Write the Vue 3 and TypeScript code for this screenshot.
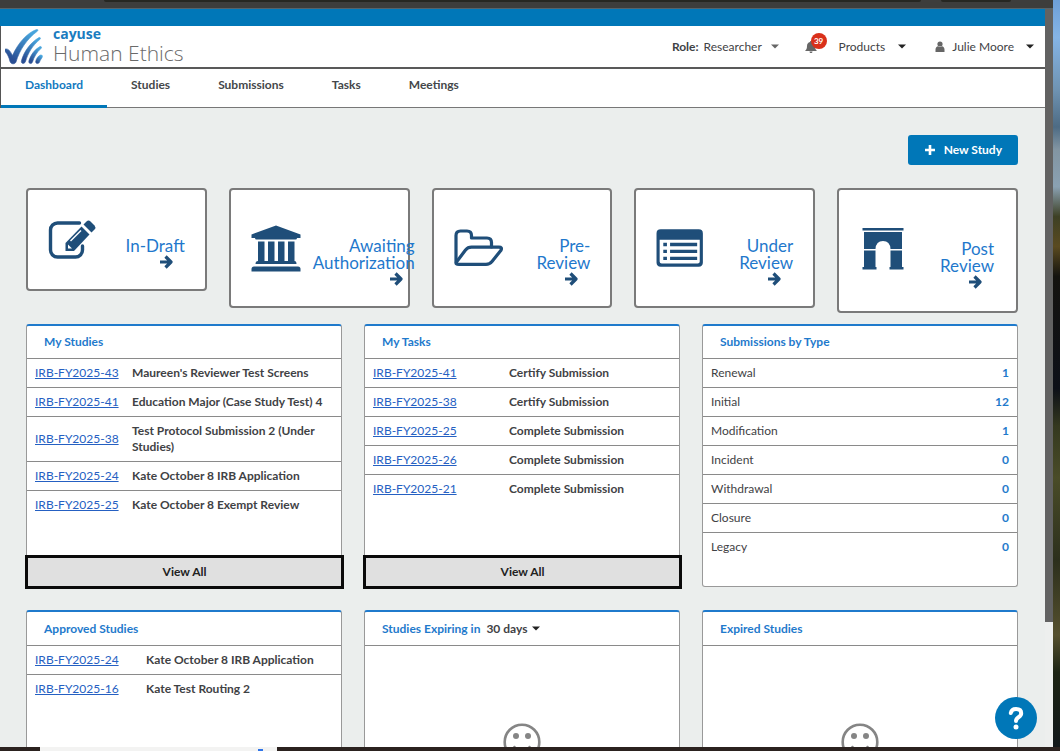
<script setup lang="ts">
import { ref } from 'vue'

interface StudyRow {
  id: string
  title: string
}

interface StatusCard {
  icon: string
  lines: string[]
  tall?: boolean
}

const tabs: string[] = ['Dashboard', 'Studies', 'Submissions', 'Tasks', 'Meetings']
const activeTab = ref('Dashboard')
const role = ref('Researcher')
const expiry = ref('30 days')

const cards: StatusCard[] = [
  { icon: 'draft', lines: ['In-Draft'] },
  { icon: 'bank', lines: ['Awaiting', 'Authorization'] },
  { icon: 'folder', lines: ['Pre-', 'Review'] },
  { icon: 'list', lines: ['Under', 'Review'] },
  { icon: 'arch', lines: ['Post', 'Review'], tall: true },
]

const myStudies: StudyRow[] = [
  { id: 'IRB-FY2025-43', title: "Maureen's Reviewer Test Screens" },
  { id: 'IRB-FY2025-41', title: 'Education Major (Case Study Test) 4' },
  { id: 'IRB-FY2025-38', title: 'Test Protocol Submission 2 (Under Studies)' },
  { id: 'IRB-FY2025-24', title: 'Kate October 8 IRB Application' },
  { id: 'IRB-FY2025-25', title: 'Kate October 8 Exempt Review' },
]

const myTasks: StudyRow[] = [
  { id: 'IRB-FY2025-41', title: 'Certify Submission' },
  { id: 'IRB-FY2025-38', title: 'Certify Submission' },
  { id: 'IRB-FY2025-25', title: 'Complete Submission' },
  { id: 'IRB-FY2025-26', title: 'Complete Submission' },
  { id: 'IRB-FY2025-21', title: 'Complete Submission' },
]

const approved: StudyRow[] = [
  { id: 'IRB-FY2025-24', title: 'Kate October 8 IRB Application' },
  { id: 'IRB-FY2025-16', title: 'Kate Test Routing 2' },
]

const types: { name: string; count: number }[] = [
  { name: 'Renewal', count: 1 },
  { name: 'Initial', count: 12 },
  { name: 'Modification', count: 1 },
  { name: 'Incident', count: 0 },
  { name: 'Withdrawal', count: 0 },
  { name: 'Closure', count: 0 },
  { name: 'Legacy', count: 0 },
]
</script>

<template>
  <div class="desktop">
    <div class="workspace">
      <div class="window">
        <div class="chrome"><span class="chrome-a"></span><span class="chrome-b"></span></div>
        <div class="viewport">
          <div class="page">
            <div class="brandbar"></div>
            <header class="header">
              <a class="logo" href="#">
                <svg class="logo-mark" viewBox="0 0 38 36" aria-hidden="true">
                  <defs>
                    <linearGradient id="mark" x1="0" y1="1" x2="0.6" y2="0">
                      <stop offset="0.2" stop-color="#2a4f94" />
                      <stop offset="1" stop-color="#47a4dc" />
                    </linearGradient>
                  </defs>
                  <g fill="url(#mark)" stroke="url(#mark)" stroke-width="0.600">
                    <path d="M0.5 20C3 19.500 5 21.500 7.500 26.500C13 14 22 4 31.500 0.500C33 0 33.500 1.500 32 2.500C22 10 14.500 21 11 33C10 35.500 6 35.500 5 32.500C4 28.500 2.500 25 0.500 23C-0.500 21.500 -0.500 20.500 0.500 20Z" />
                    <path d="M34 8.500C35.500 8 36 9.500 34.800 10.500C27.500 16.500 23 24 20.500 32.500C19.500 35.500 15.500 35 16.500 31.500C19 22.500 25.500 13.500 34 8.500Z" />
                    <path d="M35 17.500C36.500 17 37 18.500 36 19.500C31.500 23.500 29 28 27.500 33C26.500 35.500 23 35 24 31.500C26 25.500 29.500 20.500 35 17.500Z" />
                    <path d="M35.500 26C37.500 25.500 38 27.500 36.800 29C35.500 30.500 35 32 34.300 33.500C33 35.500 30 34.500 30.800 32C31.500 29.500 33 27 35.500 26Z" />
                  </g>
                </svg>
                <span class="wordmark">
                  <span class="brand">cayuse</span>
                  <span class="product">Human Ethics</span>
                </span>
              </a>
              <div class="tools">
                <label class="role" for="role">Role:</label>
                <select id="role" v-model="role" class="plain-select role-select">
                  <option>Researcher</option>
                </select>
                <svg class="caret soft" viewBox="0 0 8 5" aria-hidden="true"><path d="M0 0.500h8L4 4.500z" /></svg>
                <button class="bell" type="button" aria-label="Notifications">
                  <svg viewBox="0 0 14 14" aria-hidden="true">
                    <path d="M7 1c.7 0 1 .4 1 1 2 .5 3 2 3 4 0 2.600.6 3.600 2 5H1c1.400-1.400 2-2.400 2-5 0-2 1-3.500 3-4 0-.6.3-1 1-1zM5.500 11.500h3c0 2-3 2-3 0z" />
                  </svg>
                  <span class="badge">39</span>
                </button>
                <button class="menu products" type="button">
                  Products
                  <svg class="caret" viewBox="0 0 8 5" aria-hidden="true"><path d="M0 0.500h8L4 4.500z" /></svg>
                </button>
                <button class="menu user" type="button">
                  <svg class="person" viewBox="0 0 10 11" aria-hidden="true">
                    <circle cx="5" cy="3" r="2.600" />
                    <path d="M0.500 11V8.500C0.500 6.500 1.800 5.500 3 5.300a3.500 3.500 0 0 0 4 0c1.200.2 2.500 1.200 2.500 3.200V11z" />
                  </svg>
                  <span class="user-name">Julie Moore</span>
                  <svg class="caret" viewBox="0 0 8 5" aria-hidden="true"><path d="M0 0.500h8L4 4.500z" /></svg>
                </button>
              </div>
            </header>
            <nav class="tabs">
              <a
                v-for="tab in tabs"
                :key="tab"
                href="#"
                class="tab"
                :class="{ active: tab === activeTab }"
                @click.prevent="activeTab = tab"
              >{{ tab }}</a>
            </nav>
            <main class="main">
              <div class="actions">
                <button class="new-study" type="button">
                  <svg viewBox="0 0 10 10" aria-hidden="true"><path d="M3.700 0h2.600v3.700h3.700v2.600H6.300v3.700H3.700V6.300H0V3.700h3.700z" /></svg>
                  New Study
                </button>
              </div>

              <div class="cards">
                <a v-for="card in cards" :key="card.icon" href="#" class="card" :class="{ tall: card.tall }">
                  <svg v-if="card.icon === 'draft'" class="card-icon" viewBox="0 0 50 50" aria-hidden="true">
                    <path d="M31.500 8H9.500a7 7 0 0 0-7 7v20a7 7 0 0 0 7 7h18a7 7 0 0 0 7-7v-4" fill="none" stroke="currentColor" stroke-width="3.400" stroke-linecap="round" />
                    <path d="M17.500 28 33.500 11.500 41.500 19.500 26 36H17.500z" />
                    <path d="M35.500 9.500l3-3q2-1.800 4 0l4 4q1.800 2 0 4l-3 3z" />
                    <path d="M22.500 26 33 15.500" stroke="#fff" stroke-width="1.400" />
                    <path d="M20 29.500v4h4z" fill="#fff" />
                  </svg>
                  <svg v-else-if="card.icon === 'bank'" class="card-icon" viewBox="0 -1 50 50" aria-hidden="true">
                    <path d="M25 1.500 49.500 10.500V14H46q0 1.500-1.500 1.500h-39Q4 15.500 4 14H0.500v-3.500z" />
                    <path d="M7 17.500h6.500V37h3.500V17.500h6.500V37H27V17.500h6.500V37H37V17.500h6.500V37q2 0 2 3h-41q0-3 2.500-3z" />
                    <path d="M3 42.500h44q2.500 0 2.500 2.500v2.500h-49V45q0-2.500 2.500-2.500z" />
                  </svg>
                  <svg v-else-if="card.icon === 'folder'" class="card-icon" viewBox="1 0 50 50" aria-hidden="true">
                    <g fill="none" stroke="currentColor" stroke-width="3.200" stroke-linejoin="round" stroke-linecap="round">
                      <path d="M3 39V12.500q0-4.500 4.500-4.500H14q4.500 0 4.500 4.500V15H34q4.500 0 4.500 4.500V24" />
                      <path d="M3.500 39 12.500 27q2.300-2.800 6-2.800H46q3.500 0 2 3L39 38.500q-2.300 2.800-6 2.800H6q-4 0-2.500-2.300z" />
                    </g>
                  </svg>
                  <svg v-else-if="card.icon === 'list'" class="card-icon" viewBox="2 1 48 48" aria-hidden="true">
                    <path fill-rule="evenodd" d="M6.500 7H43q4 0 4 4v28q0 4-4 4H6.500q-4 0-4-4V11q0-4 4-4zM5.500 17v21q0 2 2 2H42q2 0 2-2V17z" />
                    <path d="M9 20h3.500v3.200H9zM15.500 20h26v3.200h-26zM9 26.700h3.500v3.200H9zM15.500 26.700h26v3.200h-26zM9 33.300h3.500v3.200H9zM15.500 33.300h26v3.200h-26z" />
                  </svg>
                  <svg v-else class="card-icon" viewBox="0 0 50 50" aria-hidden="true">
                    <path d="M2.500 3h41v2.500h-41zM4 7h38v17H30.500q-.5-8-7.500-8t-7.500 8H4zM4 25.500h11.500V42H16.500v2.500h-14V42H4zM30.500 25.500H42V42h1.500v2.500h-14V42h1z" />
                  </svg>
                  <span class="card-text">
                    <span v-for="line in card.lines" :key="line" class="card-line">{{ line }}</span>
                    <svg class="arrow" viewBox="0 0 14 14" aria-hidden="true">
                      <path d="M1 7h11M6.500 1.500 12 7l-5.500 5.500" fill="none" stroke="currentColor" stroke-width="3.200" stroke-linejoin="round" />
                    </svg>
                  </span>
                </a>
              </div>

              <div class="panels">
                <section class="panel">
                  <h2 class="panel-head">My Studies</h2>
                  <table class="rows studies">
                    <tbody>
                      <tr v-for="row in myStudies" :key="row.id">
                        <td><a href="#">{{ row.id }}</a></td>
                        <td>{{ row.title }}</td>
                      </tr>
                    </tbody>
                  </table>
                  <button class="view-all" type="button">View All</button>
                </section>
                <section class="panel">
                  <h2 class="panel-head">My Tasks</h2>
                  <table class="rows tasks">
                    <tbody>
                      <tr v-for="row in myTasks" :key="row.id">
                        <td><a href="#">{{ row.id }}</a></td>
                        <td>{{ row.title }}</td>
                      </tr>
                    </tbody>
                  </table>
                  <button class="view-all" type="button">View All</button>
                </section>
                <section class="panel">
                  <h2 class="panel-head">Submissions by Type</h2>
                  <table class="rows types">
                    <tbody>
                      <tr v-for="row in types" :key="row.name">
                        <td>{{ row.name }}</td>
                        <td>{{ row.count }}</td>
                      </tr>
                    </tbody>
                  </table>
                </section>

                <section class="panel">
                  <h2 class="panel-head roomy">Approved Studies</h2>
                  <table class="rows approved">
                    <tbody>
                      <tr v-for="row in approved" :key="row.id">
                        <td><a href="#">{{ row.id }}</a></td>
                        <td>{{ row.title }}</td>
                      </tr>
                    </tbody>
                  </table>
                </section>
                <section class="panel">
                  <div class="panel-head roomy">
                    <label for="expiry">Studies Expiring in</label>
                    <select id="expiry" v-model="expiry" class="plain-select expiry">
                      <option>30 days</option>
                    </select>
                    <svg class="caret" viewBox="0 0 8 5" aria-hidden="true"><path d="M0 0.500h8L4 4.500z" /></svg>
                  </div>
                  <div class="empty">
                    <svg class="face" viewBox="0 0 38 38" aria-hidden="true">
                      <circle cx="19" cy="19" r="17.300" fill="none" stroke="currentColor" stroke-width="2.600" />
                      <circle cx="13" cy="13" r="3" /><circle cx="25" cy="13" r="3" />
                      <path d="M11.500 24q1.500 5 7.500 5t7.500-5" fill="none" stroke="currentColor" stroke-width="2.600" stroke-linecap="round" />
                    </svg>
                  </div>
                </section>
                <section class="panel">
                  <h2 class="panel-head roomy">Expired Studies</h2>
                  <div class="empty">
                    <svg class="face" viewBox="0 0 38 38" aria-hidden="true">
                      <circle cx="19" cy="19" r="17.300" fill="none" stroke="currentColor" stroke-width="2.600" />
                      <circle cx="13" cy="13" r="3" /><circle cx="25" cy="13" r="3" />
                      <path d="M11.500 24q1.500 5 7.500 5t7.500-5" fill="none" stroke="currentColor" stroke-width="2.600" stroke-linecap="round" />
                    </svg>
                  </div>
                </section>
              </div>
            </main>
          </div>
          <div class="scrollbar"><div class="thumb"></div></div>
          <button class="help" type="button" aria-label="Help">
            <svg viewBox="0 0 16 24" aria-hidden="true">
              <path d="M2.800 7Q3.500 3 8 3q5.200 0 5.200 4.200 0 2.300-2.700 4Q8 12.800 8 15" fill="none" stroke="#fff" stroke-width="4" stroke-linecap="round" />
              <circle cx="8" cy="21" r="2.500" fill="#fff" />
            </svg>
          </button>
        </div>
      </div>
      <div class="wallpaper"></div>
    </div>
    <div class="taskbar"><span class="search"><span class="search-mark"></span></span></div>
  </div>
</template>

<style>
html,
body {
  margin: 0;
  overflow: hidden;
}
</style>

<style scoped>
.desktop {
  display: flex;
  flex-direction: column;
  height: 100vh;
  font-family: Lato, 'Liberation Sans', sans-serif;
  font-size: 12px;
  line-height: 16px;
  color: #3f4245;
  overflow: hidden;
}
.desktop *,
.desktop *::before {
  box-sizing: border-box;
}
button,
select {
  font: inherit;
  color: inherit;
  background: none;
  border: 0;
  padding: 0;
  margin: 0;
  cursor: pointer;
}
svg {
  display: block;
  flex: none;
  fill: currentColor;
}
.workspace {
  flex: 1;
  min-height: 0;
  display: flex;
}
.window {
  flex: 1;
  min-width: 0;
  display: flex;
  flex-direction: column;
}
.chrome {
  flex: none;
  height: 9px;
  display: flex;
  gap: 20px;
  padding: 0 42px 0 104px;
  background: #3d3d3c;
  border-bottom: 1px solid #55646c;
}
.chrome-a,
.chrome-b {
  height: 2px;
  background: #262722;
  border-radius: 0 0 4px 4px;
}
.chrome-a {
  flex: 1;
}
.chrome-b {
  width: 70px;
}
.viewport {
  position: relative;
  flex: 1;
  min-height: 0;
  display: flex;
}
.page {
  flex: 1;
  min-width: 0;
  background: #ebeeed;
  overflow: hidden;
}
.scrollbar {
  width: 8px;
  background: #edefee;
}
.thumb {
  height: 83%;
  background: #626262;
}
.wallpaper {
  width: 7px;
  background: linear-gradient(
    #6d9fd8 0%,
    #85b4e6 5%,
    #6f93b2 12%,
    #4d6b84 17%,
    #8295a2 20%,
    #8aa1b2 25%,
    #3d4024 29%,
    #5a4a20 33%,
    #14130f 37%,
    #0d1018 52%,
    #34381f 57%,
    #4a4c28 64%,
    #2c2f1c 75%,
    #55502e 85%,
    #1c2414 90%,
    #12181a 100%
  );
}
.taskbar {
  flex: none;
  height: 4px;
  background: #2b221f;
  display: flex;
  padding-left: 40px;
}
.search {
  width: 237px;
  background: #f3f3f2;
  padding: 2px 14px 0 0;
}
.search-mark {
  display: block;
  width: 5px;
  height: 2px;
  margin-left: auto;
  background: #2f74e8;
}

/* header */
.brandbar {
  height: 17px;
  background: #0077b8;
}
.header {
  display: flex;
  justify-content: space-between;
  height: 43px;
  padding: 0 11px 0 4px;
  background: #fff;
  border-left: 1px solid #555;
  border-bottom: 2px solid #595959;
}
.logo {
  display: flex;
  gap: 10px;
  text-decoration: none;
}
.logo-mark {
  width: 38px;
  height: 36px;
  margin-top: 3px;
}
.wordmark {
  display: flex;
  flex-direction: column;
}
.brand {
  font-family: 'Open Sans', sans-serif;
  font-weight: 700;
  font-size: 14px;
  line-height: 16px;
  color: #1a7cc0;
}
.product {
  font-family: 'Open Sans', sans-serif;
  font-weight: 300;
  font-size: 21px;
  line-height: 22px;
  color: #6a6a6a;
}
.tools {
  display: flex;
  align-items: center;
}
.role {
  font-weight: 700;
  margin-right: 5px;
}
.plain-select {
  appearance: none;
}
.role-select {
  margin-right: 8px;
}
.caret {
  width: 8px;
  height: 5px;
  color: #222;
}
.caret.soft {
  color: #666;
}
.bell {
  position: relative;
  margin-left: 25px;
  color: #666;
}
.bell svg {
  width: 14px;
  height: 14px;
}
.badge {
  position: absolute;
  left: 7px;
  top: -7px;
  width: 16px;
  height: 16px;
  border-radius: 50%;
  background: #d9301a;
  color: #fff;
  font-size: 8px;
  font-weight: 700;
  line-height: 16px;
  text-align: center;
}
.menu {
  display: flex;
  align-items: center;
}
.products {
  margin-left: 21px;
  gap: 13px;
}
.user {
  margin-left: 29px;
}
.person {
  width: 10px;
  height: 11px;
  color: #666;
}
.user-name {
  margin: 0 12px 0 7px;
}

/* tabs */
.tabs {
  display: flex;
  height: 39px;
  background: #fff;
  border-left: 1px solid #555;
  box-shadow: inset 0 -1px #777;
}
.tab {
  padding: 8px 24px 0;
  font-weight: 700;
  color: #44474a;
  text-decoration: none;
}
.tab.active {
  color: #1279c0;
  border-bottom: 3px solid #0077b8;
}

/* content */
.main {
  padding: 27px 27px 0 26px;
}
.actions {
  display: flex;
  justify-content: flex-end;
  margin-bottom: 23px;
}
.new-study {
  display: flex;
  align-items: center;
  gap: 9px;
  height: 30px;
  padding: 0 16px 0 17px;
  border-radius: 3px;
  background: #0077b8;
  color: #fff;
  font-weight: 700;
}
.new-study svg {
  width: 10px;
  height: 10px;
}
.cards {
  display: grid;
  grid-template-columns: repeat(5, minmax(0, 1fr));
  gap: 22px;
  align-items: start;
  margin-bottom: 11px;
}
.card {
  display: flex;
  align-items: center;
  justify-content: space-between;
  gap: 12px;
  padding: 0 20px;
  border: 2px solid #7a7a7a;
  border-radius: 4px;
  background: #fff;
  color: #1f4e79;
  text-decoration: none;
}
.card.tall {
  min-height: 125px;
  padding: 0 22px 2px 21px;
}
.card-icon {
  width: 50px;
  height: 50px;
}
.card-text {
  align-self: flex-end;
  display: flex;
  flex-direction: column;
  align-items: flex-end;
  padding: 47px 0 19px;
}
.card-line {
  font-size: 17px;
  line-height: 17px;
  white-space: nowrap;
  color: #1f78cc;
}
.arrow {
  width: 14px;
  height: 14px;
  margin: 1px 12px;
}
.panels {
  display: grid;
  grid-template-columns: repeat(3, minmax(0, 1fr));
  grid-auto-rows: 263px;
  gap: 23px 22px;
}
.panel {
  display: flex;
  flex-direction: column;
  background: #fff;
  border: 1px solid #999;
  border-top: 2px solid #1f7acc;
  border-radius: 3px;
}
.panel-head {
  display: flex;
  align-items: center;
  flex: none;
  height: 33px;
  margin: 0;
  padding: 0 17px;
  border-bottom: 1px solid #8a8a8a;
  font-size: 12px;
  font-weight: 700;
  line-height: 16px;
  color: #1f7acc;
}
.panel-head.roomy {
  height: 34px;
}
.expiry {
  margin: 0 4px 0 6px;
  color: #3f4245;
}
.rows {
  width: 100%;
  border-collapse: collapse;
}
.rows td {
  padding: 6px 8px;
  border-bottom: 1px solid #8a8a8a;
  font-weight: 700;
}
.rows tr:last-child td {
  border-bottom: 0;
}
.rows td:first-child {
  padding-right: 0;
  font-weight: 400;
  white-space: nowrap;
}
.rows a {
  color: #2560c2;
}
.studies td:first-child {
  width: 97px;
}
.tasks td:first-child {
  width: 136px;
}
.approved td:first-child {
  width: 111px;
}
.types td:last-child {
  text-align: right;
  color: #1f7acc;
}
.view-all {
  flex: none;
  height: 34px;
  margin: auto -3px -3px -2px;
  border: 3px solid #0a0a0a;
  background: #e0e0e0;
  color: #222;
  font-weight: 700;
}
.empty {
  flex: 1;
  display: flex;
  flex-direction: column;
  align-items: center;
  padding-top: 77px;
}
.face {
  width: 38px;
  height: 38px;
  color: #858585;
}
.help {
  position: absolute;
  right: 16px;
  bottom: 8px;
  width: 42px;
  height: 42px;
  display: flex;
  align-items: center;
  justify-content: center;
  border-radius: 50%;
  background: #0077b8;
}
.help svg {
  width: 16px;
  height: 24px;
}
</style>
